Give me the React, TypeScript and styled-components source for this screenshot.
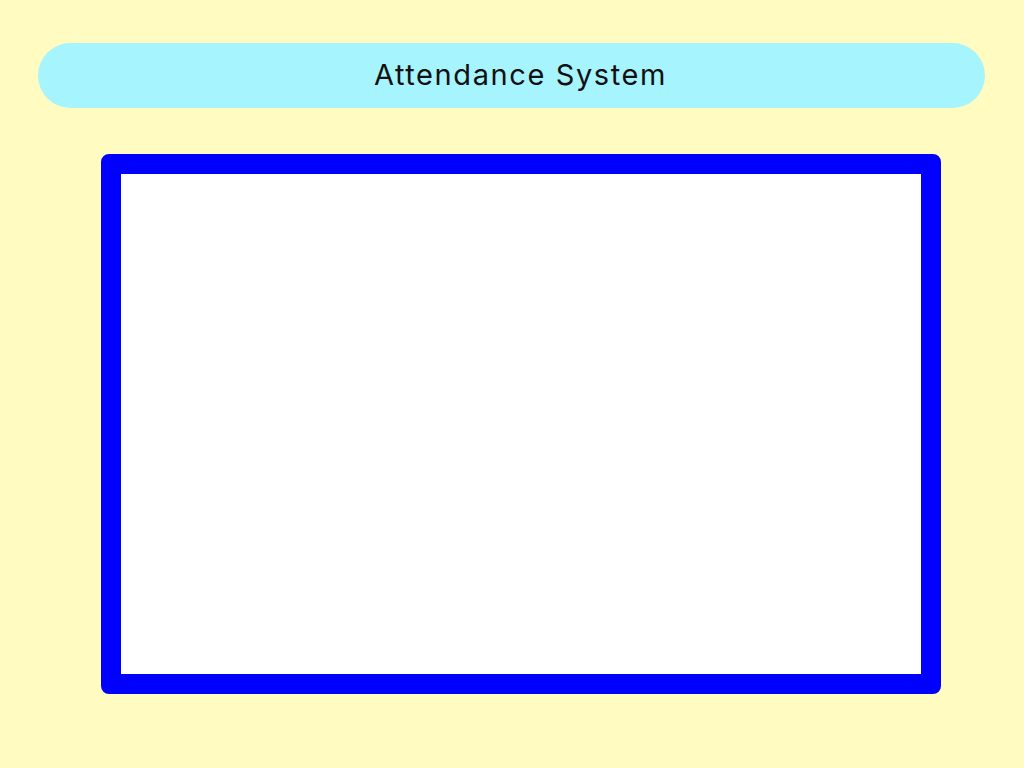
import React from "react";
import styled, { createGlobalStyle } from "styled-components";

const Global = createGlobalStyle`
  html, body { margin: 0; padding: 0; }
  body {
    background: #fffbc1;
    font-family: Inter, "Noto Sans", sans-serif;
    width: 1024px;
    height: 768px;
    overflow: hidden;
  }
`;

const Page = styled.div`
  display: flex;
  flex-direction: column;
  padding: 43px 39px 0 38px;
`;

const Header = styled.header`
  height: 65px;
  border-radius: 33px;
  background: #a6f4fe;
  display: flex;
  align-items: center;
  justify-content: center;
  padding-left: 18px;
`;

const Title = styled.h1`
  margin: 0 0 2px;
  font-family: Inter, "Noto Sans", sans-serif;
  font-weight: 400;
  font-size: 29px;
  color: #111;
  letter-spacing: 1.6px;
`;

const Frame = styled.main`
  margin: 46px 0 0 63px;
  width: 800px;
  height: 500px;
  border: 20px solid #0000ff;
  border-radius: 8px;
  background: #ffffff;
`;

export default function App() {
  return (
    <>
      <Global />
      <Page>
        <Header>
          <Title>Attendance System</Title>
        </Header>
        <Frame />
      </Page>
    </>
  );
}
